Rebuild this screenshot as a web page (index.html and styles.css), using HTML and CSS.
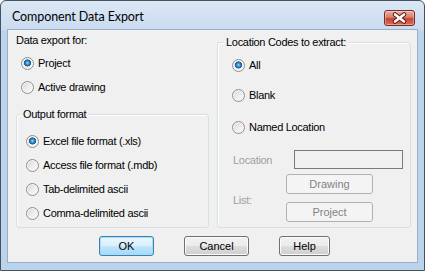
FILE: index.html
```html
<!DOCTYPE html>
<html>
<head>
<meta charset="utf-8">
<title>Component Data Export</title>
<link rel="stylesheet" href="styles.css">
</head>
<body>
<div class="window">
  <div class="titlebar">
    <span class="title">Component Data Export</span>
    <span class="close">
      <svg width="29" height="14" viewBox="0 0 29 14">
        <path d="M10 3.5 L19 10.5 M19 3.5 L10 10.5" stroke="#5a1c14" stroke-width="4.6" stroke-linecap="round" fill="none"/>
        <path d="M10 3.5 L19 10.5 M19 3.5 L10 10.5" stroke="#ffffff" stroke-width="2.6" stroke-linecap="round" fill="none"/>
      </svg>
    </span>
  </div>
  <div class="client">
    <div class="main">
      <div class="col-left">
        <div class="caption">Data export for:</div>
        <div class="radio-list">
          <div class="radio"><span class="dot checked"></span>Project</div>
          <div class="radio"><span class="dot"></span>Active drawing</div>
        </div>
        <div class="group output">
          <span class="legend">Output format</span>
          <div class="radio"><span class="dot checked"></span>Excel file format (.xls)</div>
          <div class="radio"><span class="dot"></span>Access file format (.mdb)</div>
          <div class="radio"><span class="dot"></span>Tab-delimited ascii</div>
          <div class="radio"><span class="dot"></span>Comma-delimited ascii</div>
        </div>
      </div>
      <div class="group location">
        <span class="legend">Location Codes to extract:</span>
        <div class="radio"><span class="dot checked"></span>All</div>
        <div class="radio r-blank"><span class="dot"></span>Blank</div>
        <div class="radio r-named"><span class="dot"></span>Named Location</div>
        <div class="loc-row">
          <span class="muted loc-label">Location</span>
          <span class="textbox"></span>
        </div>
        <div class="list-row">
          <span class="muted list-label">List:</span>
          <div class="btn-stack">
            <span class="btn disabled wide">Drawing</span>
            <span class="btn disabled wide">Project</span>
          </div>
        </div>
      </div>
    </div>
    <div class="actions">
      <span class="btn default ok">OK</span>
      <span class="btn cancel">Cancel</span>
      <span class="btn help">Help</span>
    </div>
  </div>
</div>
</body>
</html>
```
FILE: styles.css
```css
html, body {
  margin: 0;
  padding: 0;
  background: #ffffff;
}
body {
  font-family: "Liberation Sans", Arial, sans-serif;
  font-size: 11px;
  letter-spacing: -0.3px;
  color: #000;
}
.window {
  width: 425px;
  height: 271px;
  box-sizing: border-box;
  border: 1px solid #46525e;
  border-radius: 6px 6px 0 0;
  background: linear-gradient(to bottom, #dbe7f5 0px, #c9dbef 29px, #bcd3ec 30px, #bcd3ec 100%);
  padding: 0 7px 8px 7px;
  display: flex;
  flex-direction: column;
}
.titlebar {
  height: 29px;
  display: flex;
  align-items: flex-start;
}
.title {
  font-family: Lato, "Liberation Sans", sans-serif;
  font-size: 12.5px;
  letter-spacing: -0.1px;
  line-height: 18px;
  margin-top: 7px;
  padding-left: 4px;
  color: #000;
}
.close {
  margin-left: auto;
  margin-top: 9px;
  margin-right: 2px;
  width: 31px;
  height: 16px;
  box-sizing: border-box;
  border: 1px solid #7a2a20;
  border-radius: 3px;
  background: linear-gradient(to bottom, #eab0a6 0%, #dc7b6c 45%, #c9432f 55%, #d8705c 100%);
  box-shadow: inset 0 0 0 1px rgba(255, 255, 255, 0.35);
  display: flex;
  align-items: center;
  justify-content: center;
}
.close svg {
  display: block;
}
.client {
  height: 232px;
  background: #f0f0f0;
  box-shadow: 0 0 0 1px #98aecb;
  display: flex;
  flex-direction: column;
}
.main {
  display: flex;
  padding-left: 8px;
  gap: 8px;
  height: 198px;
}
.col-left {
  width: 193px;
  padding-top: 4px;
}
.caption {
  line-height: 13px;
}
.radio-list {
  margin-top: 4px;
  padding-left: 5px;
}
.radio {
  display: flex;
  align-items: center;
  height: 24px;
  gap: 4px;
  line-height: 13px;
}
.dot {
  width: 13px;
  height: 13px;
  box-sizing: border-box;
  border-radius: 50%;
  border: 1px solid #8e8f8f;
  background: linear-gradient(135deg, #d6d6d6 0%, #ececec 50%, #fbfbfb 100%);
  box-shadow: inset 0 0 0 1px #f6f6f6;
  flex: none;
}
.dot.checked {
  background:
    radial-gradient(circle at 50% 45%, #8ee0ff 0px, #3a9ad6 1.6px, #1b5c92 3px, #1b5c92 3.3px, rgba(27, 92, 146, 0) 3.8px),
    linear-gradient(135deg, #d6d6d6 0%, #ececec 50%, #fbfbfb 100%);
}
.group {
  position: relative;
  box-sizing: border-box;
  border: 1px solid #d5dfe5;
  border-radius: 3px;
  box-shadow: inset 1px 1px 0 #ffffff;
}
.legend {
  position: absolute;
  top: -7px;
  padding: 0 2px;
  background: #f0f0f0;
  line-height: 13px;
  white-space: nowrap;
}
.output {
  margin-top: 15px;
  height: 114px;
  padding: 14px 0 0 9px;
}
.output .legend {
  left: 4px;
}
.location {
  width: 194px;
  height: 186px;
  margin-top: 12px;
  padding: 10px 0 0 14px;
}
.location .legend {
  left: 6px;
}
.r-blank {
  margin-top: 6px;
}
.r-named {
  margin-top: 8px;
}
.muted {
  color: #a0a0a0;
}
.loc-row {
  margin-top: 11px;
  display: flex;
  align-items: center;
  height: 19px;
}
.loc-label {
  width: 62px;
  padding-left: 1px;
  box-sizing: border-box;
}
.textbox {
  width: 109px;
  height: 19px;
  box-sizing: border-box;
  border: 1px solid #7a7a7a;
  background: #f0f0f0;
}
.list-row {
  margin-top: 5px;
  display: flex;
  align-items: center;
}
.list-label {
  width: 54px;
  padding-left: 1px;
  padding-top: 3px;
  box-sizing: border-box;
}
.btn-stack {
  display: flex;
  flex-direction: column;
  gap: 8px;
}
.btn {
  height: 20px;
  box-sizing: border-box;
  border: 1px solid #707070;
  border-radius: 3px;
  background: linear-gradient(to bottom, #f2f2f2 0%, #ebebeb 50%, #dddddd 51%, #cfcfcf 100%);
  box-shadow: inset 0 0 0 1px #fbfbfb;
  text-align: center;
  line-height: 18px;
  letter-spacing: 0;
}
.btn.disabled {
  border-color: #adb2b5;
  background: #f4f4f4;
  box-shadow: none;
  color: #838383;
}
.btn.wide {
  width: 87px;
}
.btn.default {
  border-color: #3c7fb1;
  background: linear-gradient(to bottom, #eaf6fd 0%, #d9f0fc 50%, #bee6fd 51%, #a7d9f5 100%);
  box-shadow: inset 0 0 0 1px #a6dcf6;
}
.actions {
  display: flex;
  margin-top: 8px;
  padding-left: 91px;
  gap: 30px;
}
.ok {
  width: 55px;
}
.cancel {
  width: 65px;
}
.help {
  width: 51px;
}
```
